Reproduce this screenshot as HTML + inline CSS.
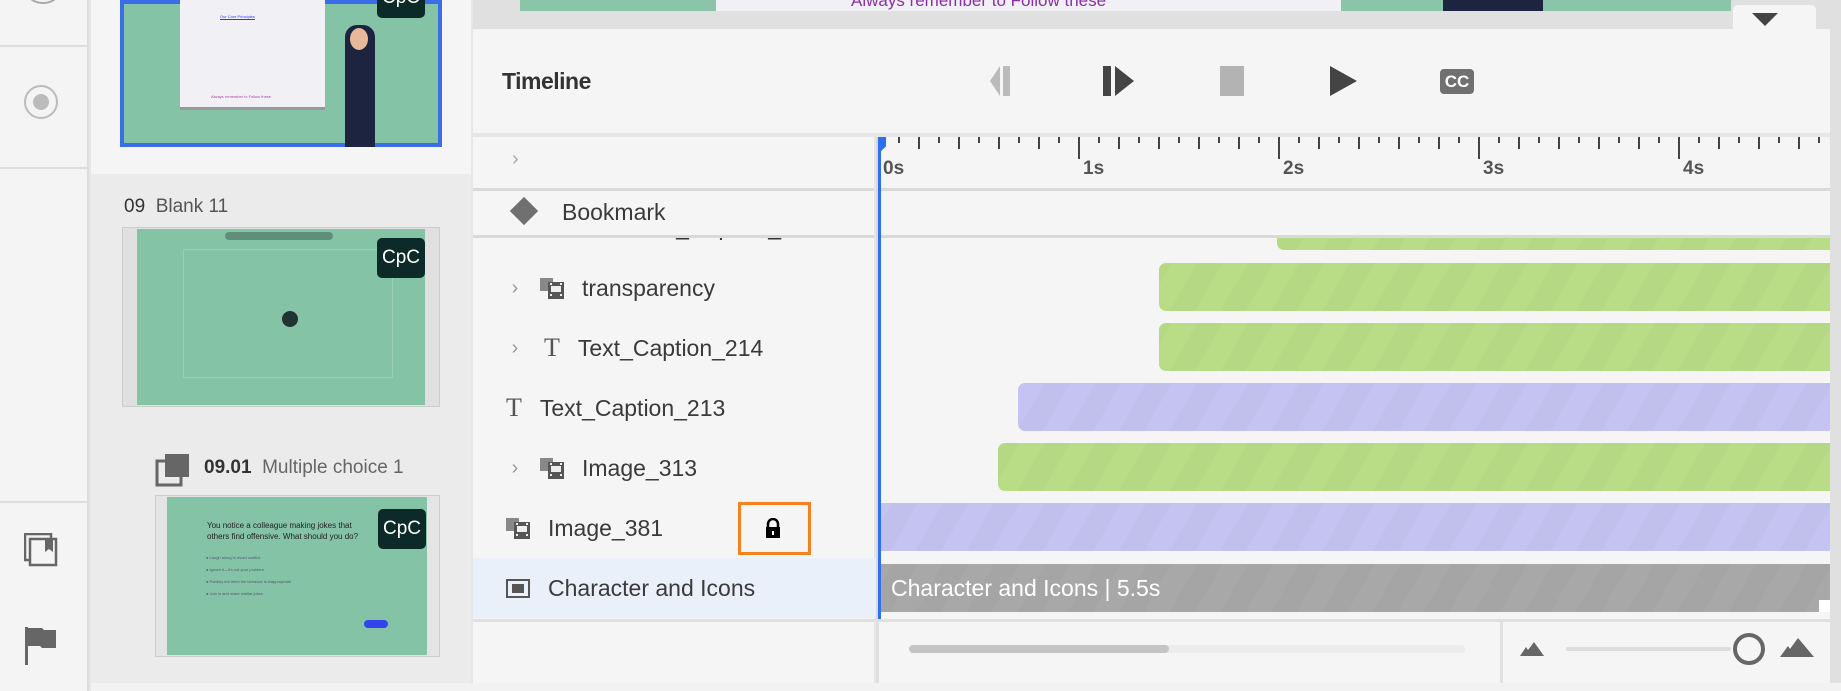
<!DOCTYPE html>
<html><head><meta charset="utf-8"><style>
*{box-sizing:border-box;margin:0;padding:0}
body{width:1841px;height:691px;overflow:hidden;background:#e6e6e6;font-family:"Liberation Sans",sans-serif;position:relative;color:#2c2c2c}
.a{position:absolute}
.thumb{position:absolute;background:#84c3a5}
.cpc{position:absolute;width:48px;height:40px;background:#0c2a27;border-radius:5px;color:#fff;font-size:19px;display:flex;align-items:center;justify-content:center}
.row{position:absolute;left:476px;width:398px;height:60px;display:flex;align-items:center;font-size:23px;color:#3a3a3a}
.bar{position:absolute;height:48px;border-radius:7px 0 0 7px;right:11px}
.g{background:repeating-linear-gradient(-60deg,#b8dd86 0 22px,#b5d885 22px 44px)}
.p{background:repeating-linear-gradient(-60deg,#c5c3f2 0 22px,#c1bfec 22px 44px)}
.chev{color:#999;font-size:20px;width:30px;text-align:center}
</style></head><body>
<div class="a" style="left:0;top:0;width:89px;height:691px;background:#f4f4f4;border-right:2px solid #ddd"></div>
<div class="a" style="left:0;top:45px;width:89px;height:2px;background:#ddd"></div>
<div class="a" style="left:0;top:167px;width:89px;height:2px;background:#ddd"></div>
<div class="a" style="left:0;top:501px;width:89px;height:2px;background:#ddd"></div>
<div class="a" style="top:-14px;width:38px;height:18px;border:2px solid #aaa;border-top:none;border-radius:0 0 18px 18px;left:24px"></div>
<div class="a" style="left:24px;top:85px;width:34px;height:34px;border:2px solid #bbb;border-radius:50%"></div>
<div class="a" style="left:33px;top:94px;width:16px;height:16px;background:#bbb;border-radius:50%"></div>
<svg class="a" style="left:24px;top:533px" width="34" height="34" viewBox="0 0 34 34"><rect x="1" y="1" width="26" height="26" fill="none" stroke="#666" stroke-width="2.5"/><rect x="6" y="6" width="26" height="26" fill="#f4f4f4" stroke="#666" stroke-width="2.5"/><path d="M21 6v13l4-3 4 3V6z" fill="#666"/></svg>
<svg class="a" style="left:24px;top:626px" width="34" height="40" viewBox="0 0 34 40"><rect x="1" y="1" width="3" height="38" fill="#666"/><path d="M4 2h14l2 2h12v18H18l-2-2H4z" fill="#666"/></svg>

<div class="a" style="left:91px;top:0;width:380px;height:683px;background:#ebebeb"></div>
<div class="a" style="left:91px;top:0;width:380px;height:174px;background:#f5f5f5"></div>
<div class="a" style="left:120px;top:0;width:322px;height:147px;border:4px solid #3b6de8;background:#84c3a5"></div>
<div class="a" style="left:180px;top:0;width:145px;height:110px;background:#f1f1f5;border-bottom:3px solid #999"></div>
<div class="a" style="left:220px;top:14px;font-size:4px;color:#33f;text-decoration:underline">Our Core Principles</div>
<div class="a" style="left:211px;top:94px;font-size:4px;color:#a4a">Always remember to Follow these</div>
<div class="a" style="left:345px;top:25px;width:30px;height:122px;background:#1d2440;border-radius:12px 12px 0 0"></div>
<div class="a" style="left:350px;top:28px;width:18px;height:22px;background:#e8b89a;border-radius:50%"></div>
<div class="cpc" style="left:377px;top:-22px">CpC</div>

<div class="a" style="left:124px;top:196px;font-size:19px;color:#555"><span style="color:#333">09</span>&nbsp; Blank 11</div>
<div class="a" style="left:122px;top:227px;width:318px;height:180px;background:#e0e0e0;border:1px solid #ccc"></div>
<div class="thumb" style="left:137px;top:229px;width:288px;height:176px"></div>
<div class="a" style="left:225px;top:232px;width:108px;height:8px;background:#5f8f7a;border-radius:4px"></div>
<div class="a" style="left:183px;top:249px;width:210px;height:129px;border:1px solid #9ccdb5"></div>
<div class="a" style="left:282px;top:311px;width:16px;height:16px;background:#233;border-radius:50%"></div>
<div class="cpc" style="left:377px;top:238px">CpC</div>

<svg class="a" style="left:155px;top:453px" width="36" height="36" viewBox="0 0 36 36"><rect x="2" y="8" width="24" height="24" fill="none" stroke="#666" stroke-width="3"/><rect x="10" y="1" width="24" height="23" fill="#666"/></svg>
<div class="a" style="left:204px;top:457px;font-size:19px;color:#666"><b style="color:#333">09.01</b>&nbsp; Multiple choice 1</div>
<div class="a" style="left:155px;top:495px;width:285px;height:162px;background:#e4e4e4;border:1px solid #ccc"></div>
<div class="thumb" style="left:167px;top:497px;width:260px;height:158px"></div>
<div class="a" style="left:207px;top:520px;font-size:8px;color:#222;line-height:11px">You notice a colleague making jokes that<br>others find offensive. What should you do?</div>
<div class="a" style="left:206px;top:552px;font-size:4px;color:#557;line-height:12px">● Laugh along to avoid conflict<br>● Ignore it—it's not your problem<br>● Publicly tell them the behavior is inappropriate<br>● Join in and make similar jokes</div>
<div class="a" style="left:364px;top:620px;width:24px;height:8px;background:#3344ee;border-radius:4px"></div>
<div class="cpc" style="left:378px;top:509px">CpC</div>

<div class="a" style="left:473px;top:0;width:1368px;height:33px;background:#e0e0e0"></div>
<div class="a" style="left:520px;top:0;width:196px;height:11px;background:#8ac5a9"></div>
<div class="a" style="left:716px;top:0;width:625px;height:11px;background:#f1f1f5;overflow:hidden"><div style="position:absolute;left:135px;top:-9px;font-size:17px;color:#8a2fa8">Always remember to Follow these</div></div>
<div class="a" style="left:1341px;top:0;width:390px;height:11px;background:#8ac5a9"></div>
<div class="a" style="left:1443px;top:0;width:100px;height:11px;background:#1d2440"></div>
<div class="a" style="left:1733px;top:5px;width:83px;height:28px;background:#f5f5f5;border-radius:5px 5px 0 0"></div>
<div class="a" style="left:1752px;top:13px;width:0;height:0;border-left:13px solid transparent;border-right:13px solid transparent;border-top:13px solid #444"></div>

<div class="a" style="left:473px;top:29px;width:1357px;height:104px;background:#f5f5f5"></div>
<div class="a" style="left:502px;top:68px;font-size:23px;color:#333;font-weight:bold;letter-spacing:-0.5px">Timeline</div>
<svg class="a" style="left:990px;top:66px" width="30" height="30" viewBox="0 0 30 30"><path d="M0 15 10 0v30z" fill="#bbb"/><rect x="13" y="0" width="7" height="30" fill="#bbb"/></svg>
<svg class="a" style="left:1103px;top:66px" width="32" height="30" viewBox="0 0 32 30"><rect x="0" y="0" width="8" height="30" fill="#444"/><path d="M12 0 31 15 12 30z" fill="#444"/></svg>
<div class="a" style="left:1220px;top:66px;width:24px;height:30px;background:#b3b3b3"></div>
<svg class="a" style="left:1330px;top:66px" width="28" height="30" viewBox="0 0 28 30"><path d="M0 0 27 15 0 30z" fill="#444"/></svg>
<div class="a" style="left:1440px;top:69px;width:34px;height:25px;background:#707070;border-radius:4px;color:#fff;font-size:17px;font-weight:bold;text-align:center;line-height:25px">CC</div>

<div class="a" style="left:473px;top:137px;width:401px;height:546px;background:#f5f5f5"></div>
<div class="a" style="left:473px;top:188px;width:401px;height:3px;background:#d9d9d9"></div>
<div class="a" style="left:473px;top:235px;width:401px;height:3px;background:#d9d9d9"></div>
<div class="a" style="left:876px;top:137px;width:3px;height:546px;background:#d9d9d9"></div>
<div class="a" style="left:879px;top:137px;width:951px;height:546px;background:#f5f5f5"></div>
<div class="a" style="left:879px;top:188px;width:951px;height:3px;background:#d9d9d9"></div>
<div class="a" style="left:879px;top:235px;width:951px;height:3px;background:#d9d9d9"></div>
<div class="a" style="left:512px;top:148px;color:#aaa;font-size:20px">›</div>
<div class="a" style="left:514px;top:201px;width:20px;height:20px;background:#707070;transform:rotate(45deg)"></div>
<div class="a" style="left:562px;top:199px;font-size:23px;color:#3a3a3a">Bookmark</div>

<div class="a" style="left:479px;top:238px;width:395px;height:381px;overflow:hidden">
 <div style="position:absolute;left:155px;top:-24px;font-size:23px;color:#333">Text_Caption_2</div>
</div>
<div class="row" style="top:258px;padding-left:24px"><span class="chev">›</span><svg width="26" height="24" viewBox="0 0 26 24" style="margin:0 16px 0 10px"><rect x="0" y="2" width="13" height="13" fill="#888"/><rect x="8" y="6" width="16" height="17" fill="#555"/><rect x="11" y="10" width="10" height="6" fill="#eee"/><path d="M10 8h2M10 19h2M20 8h2M20 19h2" stroke="#eee" stroke-width="2"/></svg>transparency</div>
<div class="row" style="top:318px;padding-left:24px"><span class="chev">›</span><span style="margin:0 18px 0 14px;font-family:'Liberation Serif',serif;font-size:26px;color:#555">T</span>Text_Caption_214</div>
<div class="row" style="top:378px;padding-left:30px"><span style="margin-right:18px;font-family:'Liberation Serif',serif;font-size:26px;color:#555">T</span>Text_Caption_213</div>
<div class="row" style="top:438px;padding-left:24px"><span class="chev">›</span><svg width="26" height="24" viewBox="0 0 26 24" style="margin:0 16px 0 10px"><rect x="0" y="2" width="13" height="13" fill="#888"/><rect x="8" y="6" width="16" height="17" fill="#555"/><rect x="11" y="10" width="10" height="6" fill="#eee"/><path d="M10 8h2M10 19h2M20 8h2M20 19h2" stroke="#eee" stroke-width="2"/></svg>Image_313</div>
<div class="row" style="top:498px;padding-left:30px"><svg width="26" height="24" viewBox="0 0 26 24" style="margin-right:16px"><rect x="0" y="2" width="13" height="13" fill="#888"/><rect x="8" y="6" width="16" height="17" fill="#555"/><rect x="11" y="10" width="10" height="6" fill="#eee"/><path d="M10 8h2M10 19h2M20 8h2M20 19h2" stroke="#eee" stroke-width="2"/></svg>Image_381</div>
<div class="a" style="left:738px;top:502px;width:73px;height:53px;border:3.5px solid #f5821f"></div>
<svg class="a" style="left:765px;top:518px" width="16" height="20" viewBox="0 0 16 20"><path d="M3 9V6a5 5 0 0 1 10 0v3" fill="none" stroke="#000" stroke-width="2.5"/><rect x="1" y="9" width="14" height="11" fill="#000"/><rect x="7" y="13" width="2" height="4" fill="#fff"/></svg>
<div class="a" style="left:473px;top:558px;width:403px;height:60px;background:#e9f0fa"></div>
<div class="row" style="top:558px;padding-left:30px"><span style="display:inline-block;width:24px;height:19px;border:2px solid #555;margin-right:18px;position:relative"><span style="position:absolute;left:4px;top:3px;width:12px;height:9px;background:#555"></span></span>Character and Icons</div>
<div class="a" style="left:473px;top:619px;width:1357px;height:3px;background:#e0e0e0"></div>

<svg class="a" style="left:879px;top:137px" width="951" height="50">
<g stroke="#444" stroke-width="2">
<path d="M20 0v6M40 0v12M60 0v6M80 0v12M100 0v6M120 0v12M140 0v6M160 0v12M180 0v6M200 0v22M220 0v6M240 0v12M260 0v6M280 0v12M300 0v6M320 0v12M340 0v6M360 0v12M380 0v6M400 0v22M420 0v6M440 0v12M460 0v6M480 0v12M500 0v6M520 0v12M540 0v6M560 0v12M580 0v6M600 0v22M620 0v6M640 0v12M660 0v6M680 0v12M700 0v6M720 0v12M740 0v6M760 0v12M780 0v6M800 0v22M820 0v6M840 0v12M860 0v6M880 0v12M900 0v6M920 0v12M940 0v6"/>
</g>
<g font-family="Liberation Sans" font-size="19" font-weight="bold" fill="#555"><text x="4" y="37">0s</text><text x="204" y="37">1s</text><text x="404" y="37">2s</text><text x="604" y="37">3s</text><text x="804" y="37">4s</text></g>
</svg>
<div class="a" style="left:878px;top:137px;width:3px;height:482px;background:#2e6ff0"></div>
<div class="a" style="left:878px;top:137px;width:8px;height:17px;background:#2e6ff0;clip-path:polygon(0 0,100% 0,100% 55%,0 100%)"></div>

<div class="bar g" style="left:1277px;top:238px;height:12px;border-radius:0 0 0 7px"></div>
<div class="bar g" style="left:1159px;top:263px"></div>
<div class="bar g" style="left:1159px;top:323px"></div>
<div class="bar p" style="left:1018px;top:383px"></div>
<div class="bar g" style="left:998px;top:443px"></div>
<div class="bar p" style="left:881px;top:503px;border-radius:0"></div>
<div class="bar" style="left:881px;top:564px;border-radius:0;background:repeating-linear-gradient(-60deg,#a8a8a8 0 22px,#a5a5a5 22px 44px);color:#fff;font-size:23px;line-height:48px;padding-left:10px">Character and Icons | 5.5s</div>
<div class="a" style="left:1819px;top:600px;width:11px;height:12px;background:#fff"></div>

<div class="a" style="left:876px;top:619px;width:3px;height:64px;background:#e0e0e0"></div>
<div class="a" style="left:1500px;top:619px;width:3px;height:64px;background:#e0e0e0"></div>
<div class="a" style="left:909px;top:645px;width:556px;height:8px;background:#ececec;border-radius:4px"></div>
<div class="a" style="left:909px;top:645px;width:260px;height:8px;background:#c4c4c4;border-radius:4px"></div>
<svg class="a" style="left:1520px;top:642px" width="30" height="16"><path d="M0 14 6 5 8 8 14 0 24 14z" fill="#666"/></svg>
<div class="a" style="left:1566px;top:647px;width:165px;height:4px;background:#ddd;border-radius:2px"></div>
<div class="a" style="left:1733px;top:633px;width:32px;height:32px;border:4px solid #666;border-radius:50%"></div>
<svg class="a" style="left:1780px;top:638px" width="40" height="20"><path d="M0 19 8 8 10 11 18 0 34 19z" fill="#666"/></svg>
<div class="a" style="left:91px;top:683px;width:1750px;height:8px;background:#f2f2f2"></div>
<div class="a" style="left:1830px;top:29px;width:11px;height:654px;background:#e0e0e0"></div>
</body></html>
